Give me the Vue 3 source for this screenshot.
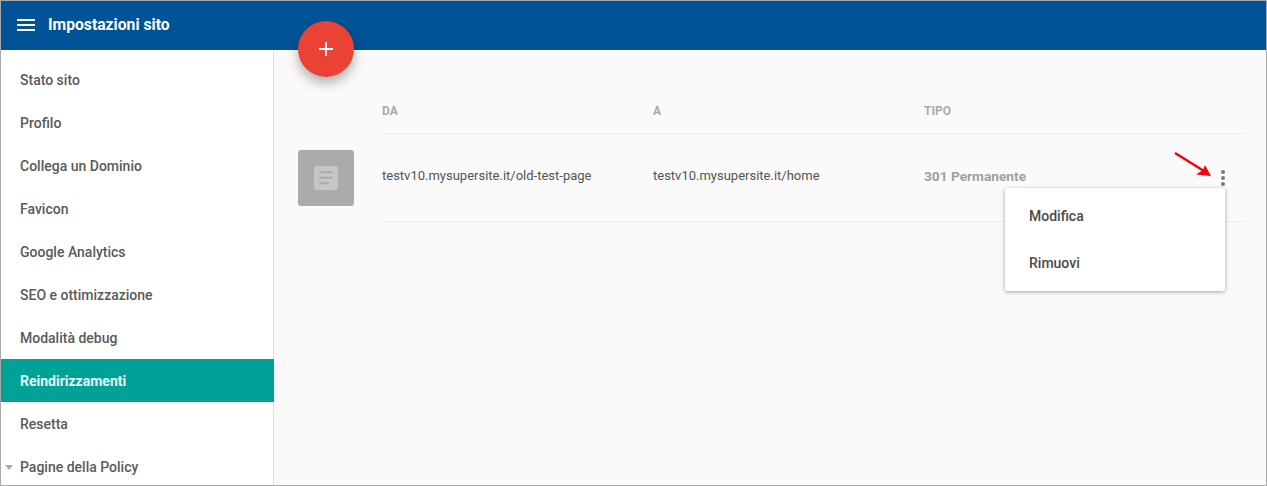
<script setup>
const items = ['Stato sito','Profilo','Collega un Dominio','Favicon','Google Analytics','SEO e ottimizzazione','Modalità debug','Reindirizzamenti','Resetta','Pagine della Policy']
</script>

<template>
  <div class="win">
    <header class="top">
      <svg class="burger" width="18" height="12" viewBox="0 0 18 12"><path d="M0 1h18M0 6h18M0 11h18" stroke="#fff" stroke-width="1.8" fill="none"/></svg>
      <span class="title">Impostazioni sito</span>
    </header>
    <button class="fab" aria-label="Aggiungi">
      <svg width="14" height="14" viewBox="0 0 14 14"><path d="M7 0v14M0 7h14" stroke="#fff" stroke-width="1.8" fill="none"/></svg>
    </button>
    <div class="body">
      <nav class="side">
        <a v-for="it in items" :key="it" class="item" :class="{active: it === 'Reindirizzamenti'}">
          <i v-if="it === 'Pagine della Policy'" class="caret"></i>{{ it }}
        </a>
      </nav>
      <main class="main">
        <div class="grid head">
          <span>DA</span><span>A</span><span>TIPO</span>
        </div>
        <div class="rowwrap">
          <div class="thumb">
            <svg width="24" height="24" viewBox="0 0 24 24"><rect width="24" height="24" rx="3" fill="#c6c6c6"/><path d="M5.300 6.300h13.400M5.300 11.700h13.400M5.300 17.300h9.700" stroke="#ababab" stroke-width="2" fill="none"/></svg>
          </div>
          <div class="grid row">
            <span>testv10.mysupersite.it/old-test-page</span>
            <span>testv10.mysupersite.it/home</span>
            <span class="tipo">301 Permanente</span>
          </div>
          <svg class="arrow" width="40" height="26" viewBox="0 0 40 26"><path d="M1 1L30 19" stroke="#f5000f" stroke-width="2.400" fill="none"/><path d="M37 24L22 22.500L29 18L31 13Z" fill="#f5000f"/></svg>
          <span class="kebab"><i></i><i></i><i></i></span>
          <div class="menu">
            <div class="mi">Modifica</div>
            <div class="mi">Rimuovi</div>
          </div>
        </div>
      </main>
    </div>
  </div>
</template>

<style>
html, body { margin: 0; padding: 0; background: #fff; }
</style>

<style scoped>
.win { position: relative; box-sizing: border-box; width: 1267px; height: 486px; border: 1px solid #a9a9a9; overflow: hidden; display: flex; flex-direction: column; font-family: Roboto, "Liberation Sans", sans-serif; font-weight: 500; font-size: 14px; }
.top { flex: none; height: 49px; background: #005396; display: flex; align-items: center; padding-left: 16px; box-sizing: border-box; color: #fff; }
.burger { margin-right: 13px; position: relative; top: -1px; }
.title { font-size: 15.700px; font-weight: 700; position: relative; top: -1px; }
.fab { position: absolute; left: 297px; top: 20px; width: 56px; height: 56px; border-radius: 50%; background: #ea4335; border: 0; padding: 0; display: flex; align-items: center; justify-content: center; box-shadow: 0 6px 12px rgba(0,0,0,.3); z-index: 3; }
.body { flex: 1; display: flex; min-height: 0; }
.side { flex: none; width: 273px; box-sizing: border-box; background: #fff; border-right: 1px solid #e2e2e2; padding-top: 8px; }
.item { position: relative; display: flex; align-items: center; height: 43px; padding: 1px 0 0 19px; color: #5a5a5a; font-size: 14px; width: 273px; box-sizing: border-box; }
.item.active { background: #00a298; color: #e6f7f5; font-weight: 700; }
.caret { position: absolute; left: 4px; top: 20px; border: 4.500px solid transparent; border-top: 5px solid #aaa; border-bottom: 0; }
.main { flex: 1; background: #fafafa; padding: 0 21px 0 24px; min-width: 0; }
.grid { display: grid; grid-template-columns: 271px 271px 1fr; margin-left: 84px; }
.head { height: 84px; padding-top: 53px; box-sizing: border-box; line-height: 16px; font-size: 12px; font-weight: 700; color: #aaa; border-bottom: 1px solid #ececec; }
.rowwrap { position: relative; }
.thumb { position: absolute; left: 0; top: 16px; width: 56px; height: 56px; border-radius: 3px; background: #ababab; display: flex; align-items: center; justify-content: center; }
.row { height: 88px; align-items: center; box-sizing: border-box; border-bottom: 1px solid #ececec; color: #555; font-size: 13px; line-height: 16px; font-weight: 400; padding-bottom: 4px; }
.tipo { color: #a0a0a0; font-weight: 700; font-size: 13.700px; }
.arrow { position: absolute; left: 876px; top: 18px; }
.kebab { position: absolute; left: 923px; top: 36px; display: flex; flex-direction: column; gap: 2px; }
.kebab i { display: block; width: 4px; height: 4px; border-radius: 50%; background: #777; }
.menu { position: absolute; left: 707px; top: 54px; width: 220px; height: 103px; padding: 4px 0; box-sizing: border-box; background: #fff; border-radius: 2px; box-shadow: 0 1px 4px rgba(0,0,0,.35); z-index: 2; }
.mi { height: 47px; display: flex; align-items: center; padding-left: 24px; color: #4a4a4a; font-size: 14px; }
</style>
